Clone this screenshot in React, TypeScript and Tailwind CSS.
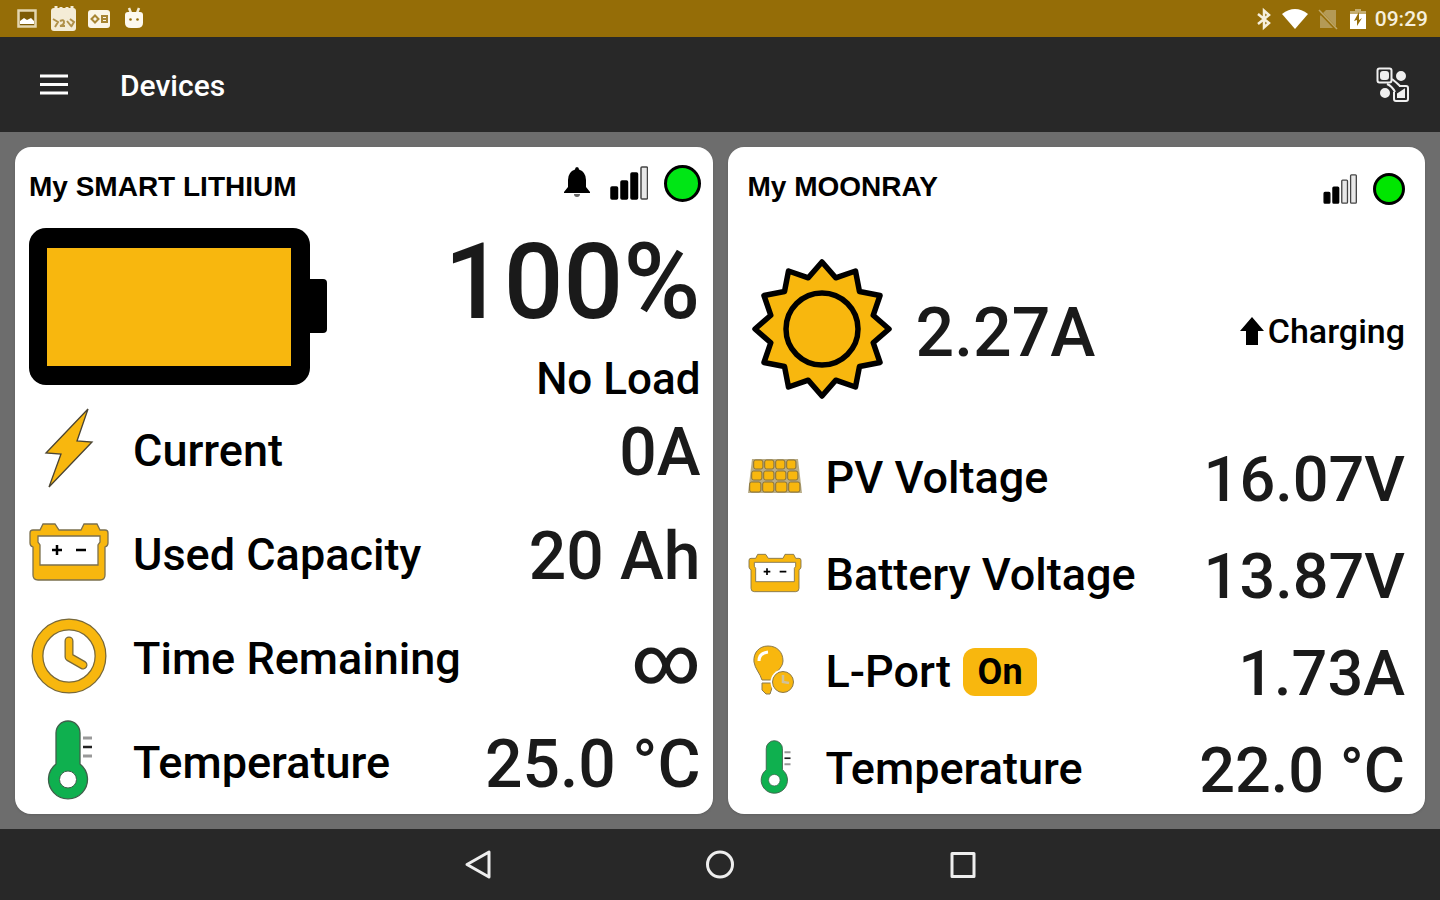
import React, { useState } from 'react';

const AMBER = '#f8b70e';
const GREEN = '#0fb04f';

interface IconProps {
  className?: string;
}

const StatusBar: React.FC = () => (
  <div className="flex h-[37px] items-center justify-between bg-[#956d07] pl-4 pr-3 text-[#f6efdc]">
    <div className="flex items-center gap-[10px]">
      <svg className="h-6 w-6" viewBox="0 0 24 24" fill="none">
        <rect x="2.5" y="3.5" width="17" height="16" fill="#7d5b06" stroke="#e3d6b0" strokeWidth="2.5" />
        <path d="M4 17v-3l4-3 3 2 4-2 3 3v3z" fill="#fff" />
      </svg>
      <svg className="h-7 w-7" viewBox="0 0 28 28">
        <path d="M6 1v4M22 1v4M11 2v3M17 2v3" stroke="#f4ecd6" strokeWidth="3" />
        <rect x="1" y="3" width="25" height="23" rx="3" fill="#f4ecd6" />
        <path d="M3 14l5 3-3 5M10 16q4-2 4 1t-4 4h5M17 16l4 5M20 14l4 3-3 5" stroke="#b0914a" strokeWidth="2" fill="none" />
      </svg>
      <svg className="h-6 w-6" viewBox="0 0 24 24">
        <rect x="0" y="3" width="22" height="18" rx="3" fill="#fbf6e8" />
        <path d="M3.5 12L7 8.500l3.500 3.500L7 15.500z" fill="none" stroke="#a88635" strokeWidth="2" />
        <path d="M14 9h5v6h-5zM14 12h5" fill="none" stroke="#a88635" strokeWidth="2" />
      </svg>
      <svg className="h-6 w-6" viewBox="0 0 24 24" fill="#fdf9ee">
        <path d="M7 1l2 5M17 1l-2 5" stroke="#f4ecd6" strokeWidth="2.500" />
        <path d="M3 8q0-3 3-3h12q3 0 3 3v8q0 5-6 5H9q-6 0-6-5z" />
        <circle cx="8.500" cy="12.500" r="1.300" fill="#956d07" />
        <circle cx="15.500" cy="12.500" r="1.300" fill="#956d07" />
      </svg>
    </div>
    <div className="flex items-center gap-[7px]">
      <div className="flex items-center gap-[10px]">
        <svg className="h-6 w-4" viewBox="0 0 16 24" fill="none" stroke="currentColor" strokeWidth="2.500">
          <path d="M2 7l11 9-5 4.500V3.500L13 8 2 17" />
        </svg>
        <svg className="h-6 w-[26px]" viewBox="0 0 26 24">
          <path d="M13 22L0 7q13-10 26 0z" fill="#fff" />
        </svg>
        <svg className="h-6 w-5" viewBox="0 0 20 24">
          <path d="M8 3h10v18H2V9z" fill="#b49a56" />
          <path d="M0 3l19 20" stroke="#956d07" strokeWidth="3" />
          <path d="M1 3l18 19" stroke="#bfa768" strokeWidth="1.500" />
        </svg>
        <svg className="h-6 w-5" viewBox="0 0 20 24">
          <path d="M7 2h6v2h5v4H2V4h5z" fill="#c4ad70" />
          <path d="M2 7h16v15H2z" fill="#fff" />
          <path d="M11 5v8l3-2-5 8v-6l-3 1z" fill="#956d07" />
        </svg>
      </div>
      <span className="text-[21px] leading-6 font-medium">09:29</span>
    </div>
  </div>
);

const AppBar: React.FC = () => (
  <header className="flex h-[95px] items-center justify-between bg-[#282828] pl-10 pr-[30px] text-white">
    <div className="flex items-center gap-[52px]">
      <button type="button" aria-label="Menu">
        <svg className="h-6 w-7" viewBox="0 0 28 24" stroke="currentColor" strokeWidth="3">
          <path d="M0 3h28M0 11.500h28M0 20h28" />
        </svg>
      </button>
      <h1 className="pt-0.5 text-3xl font-medium">Devices</h1>
    </div>
    <button type="button" aria-label="Device groups">
      <svg className="h-9 w-[34px]" viewBox="0 0 34 36" fill="none" stroke="#f0f0f0" strokeWidth="2">
        <rect x="1.500" y="1.500" width="14" height="14" rx="2" />
        <rect x="5" y="5" width="7" height="7" rx="2" fill="#f0f0f0" />
        <circle cx="25" cy="9" r="4" fill="#f0f0f0" />
        <path d="M16 12q5 4 8 7M11 17q5 2 8 8" />
        <circle cx="9" cy="26" r="4" fill="#f0f0f0" />
        <path d="M23 19h7q2 0 2 2v11q0 2-2 2H20q-2 0-2-2v-7" />
        <path d="M28 23v7h-6v-3z" fill="#f0f0f0" />
      </svg>
    </button>
  </header>
);

const SignalBars: React.FC<IconProps & { level: number }> = ({ className, level }) => {
  const heights = [12, 18, 26, 32];
  return (
    <svg className={className} viewBox="0 0 38 34" role="img" aria-label="Signal strength">
      {heights.map((h, i) => (
        <rect
          key={h}
          x={1 + i * 10}
          y={33 - h}
          width="6.500"
          height={h}
          rx="1"
          fill={i < level ? '#000' : '#e8e8e8'}
          stroke={i < level ? '#000' : '#444'}
          strokeWidth="1.500"
        />
      ))}
    </svg>
  );
};

const BellIcon: React.FC<IconProps> = ({ className }) => (
  <svg className={className} viewBox="0 0 26 32">
    <path d="M13 0q2 0 2 2.500Q22 5 22 13v7l4 5v1H0v-1l4-5v-7Q4 5 11 2.500 11 0 13 0z" />
    <path d="M10 27h6q0 3-3 3t-3-3z" fill="#666" />
  </svg>
);

const BatteryLevel: React.FC<IconProps> = ({ className }) => (
  <svg className={className} viewBox="0 0 300 157" role="img" aria-label="Battery full">
    <rect width="281" height="157" rx="17" />
    <rect x="270" y="51" width="28" height="54" rx="4" />
    <rect x="18" y="20" width="244" height="118" fill={AMBER} />
  </svg>
);

const BoltIcon: React.FC<IconProps> = ({ className }) => (
  <svg className={className} viewBox="0 0 80 80">
    <path d="M59 1L17 45l15 1-12 33 43-45-15-1z" fill={AMBER} stroke="#4a4433" strokeWidth="1.300" />
  </svg>
);

const CarBatteryIcon: React.FC<IconProps> = ({ className }) => (
  <svg className={className} viewBox="0 0 80 60">
    <path
      d="M14 2h12l4 6h22l3-6h13l3 6h5q3 0 3 3v10q0 3-3 4v28q0 5-5 5H9q-5 0-5-5V25q-3-1-3-4V11q0-3 3-3h7z"
      fill={AMBER}
      stroke="#7b704e"
      strokeWidth="1.300"
    />
    <path d="M9 14h62v6l-2 3v20H11V23l-2-3z" fill="#fff" stroke="#7b704e" strokeWidth="1.300" />
    <path d="M23 28h10M28 23v10M47 28h10" stroke="#000" strokeWidth="2.500" />
  </svg>
);

const ClockIcon: React.FC<IconProps> = ({ className }) => (
  <svg className={className} viewBox="0 0 80 80" fill="none">
    <circle cx="40" cy="40" r="31.500" stroke="#77683a" strokeWidth="12" />
    <circle cx="40" cy="40" r="31.500" stroke={AMBER} strokeWidth="9.500" />
    <path d="M40 25v16l14 8" stroke="#77683a" strokeWidth="9" strokeLinecap="round" strokeLinejoin="round" />
    <path d="M40 25v16l14 8" stroke={AMBER} strokeWidth="6.500" strokeLinecap="round" strokeLinejoin="round" />
  </svg>
);

const ThermometerIcon: React.FC<IconProps> = ({ className }) => (
  <svg className={className} viewBox="0 0 80 80">
    <path
      d="M27 44V13a12 12 0 0 1 24 0v31a19.500 19.500 0 1 1-24 0z"
      fill={GREEN}
      stroke="#3f5f4a"
      strokeWidth="1.300"
    />
    <circle cx="39" cy="59.500" r="8.500" fill="#fff" stroke="#3f5f4a" />
    <path d="M54 18h9M54 36h9" stroke="#999" strokeWidth="3" />
    <path d="M54 27h9" stroke="#222" strokeWidth="2.500" />
  </svg>
);

const SunIcon: React.FC<IconProps> = ({ className }) => {
  const points = Array.from({ length: 24 }, (_, i) => {
    const r = i % 2 === 0 ? 67 : 53;
    const a = (i * Math.PI) / 12;
    return `${70 + r * Math.sin(a)},${70 - r * Math.cos(a)}`;
  }).join(' ');
  return (
    <svg className={className} viewBox="0 0 140 140" stroke="#000" strokeLinejoin="round">
      <polygon points={points} fill={AMBER} strokeWidth="5.500" />
      <circle cx="70" cy="70" r="36" fill={AMBER} strokeWidth="5.500" />
    </svg>
  );
};

const SolarPanelIcon: React.FC<IconProps> = ({ className }) => {
  const rows = [
    { y: 2, h: 9, left: 5, width: 44 },
    { y: 13, h: 9, left: 3, width: 48 },
    { y: 24, h: 10, left: 1, width: 52 },
  ];
  return (
    <svg className={className} viewBox="0 0 54 36">
      <path d="M4 1h46l4 34H0z" fill="#b9ad88" />
      {rows.map((row) =>
        [0, 1, 2, 3].map((i) => (
          <rect
            key={`${row.y}-${i}`}
            x={row.left + (i * row.width) / 4 + 0.7}
            y={row.y}
            width={row.width / 4 - 1.8}
            height={row.h}
            rx="2"
            fill={AMBER}
            stroke="#86713a"
            strokeWidth="1"
          />
        ))
      )}
    </svg>
  );
};

const BulbTimerIcon: React.FC<IconProps> = ({ className }) => (
  <svg className={className} viewBox="0 0 54 50" stroke="#8c7a4a" strokeWidth="1">
    <path d="M20 1C11 1 5 8 6 17c1 7 6 11 8 18h10c0-6 11-11 11-19C35 7 29 1 20 1z" fill={AMBER} />
    <path d="M14 38h10v5l-2 6h-4l-4-4z" fill={AMBER} />
    <path d="M11 16q0-8 9-9" fill="none" stroke="#fff" strokeWidth="3" />
    <circle cx="35" cy="37" r="12.500" fill="#fff" stroke="none" />
    <circle cx="35" cy="37" r="10.500" fill={AMBER} />
    <path d="M35 30v7l6 1" fill="none" stroke="#cfc19a" strokeWidth="2.500" />
  </svg>
);

const ArrowUpIcon: React.FC<IconProps> = ({ className }) => (
  <svg className={className} viewBox="0 0 24 28">
    <path d="M12 0l12 14h-6v14H6V14H0z" />
  </svg>
);

interface ReadingProps {
  icon: React.ReactNode;
  label: string;
  value: string;
  children?: React.ReactNode;
}

const LargeReading: React.FC<ReadingProps> = ({ icon, label, value }) => (
  <div className="flex min-h-[104px] items-center">
    <span className="flex w-20 flex-none justify-center pb-1">{icon}</span>
    <dt className="ml-6 flex-1 pt-0.5 text-[45px] leading-[52px]">{label}</dt>
    <dd className="pt-1.5 text-[66px] leading-[72px] text-[#1a1a1a]">{value}</dd>
  </div>
);

const SmallReading: React.FC<ReadingProps> = ({ icon, label, value, children }) => (
  <div className="flex min-h-[88px] items-center">
    <span className="flex w-[54px] flex-none justify-center pb-0.5">{icon}</span>
    <dt className="ml-6 flex flex-1 items-center gap-3 pt-0.5 text-[45px] leading-[52px]">
      {label}
      {children}
    </dt>
    <dd className="pt-1.5 text-[63px] leading-[72px] text-[#1a1a1a]">{value}</dd>
  </div>
);

const LithiumCard: React.FC = () => (
  <section className="flex flex-col rounded-2xl bg-white pl-[14px] pr-3 shadow">
    <div className="flex h-[78px] items-center justify-between">
      <h2 className="pt-0.5 font-['Liberation_Sans',Arial,sans-serif] text-[28px] leading-8 font-bold">My SMART LITHIUM</h2>
      <div className="flex items-center gap-4 pb-1.5">
        <BellIcon className="mr-1 h-8 w-[26px]" />
        <SignalBars className="h-[34px] w-[38px]" level={3} />
        <span className="h-[37px] w-[37px] rounded-full border-[3px] border-black bg-[#00e615]" />
      </div>
    </div>
    <div className="flex h-[173px] items-start justify-between">
      <BatteryLevel className="mt-[3px] h-[157px] w-[300px]" />
      <div className="pt-1 text-right">
        <p className="text-[105px] leading-[108px] text-[#1a1a1a]">100%</p>
        <p className="mt-4 text-[44px] leading-[52px]">No Load</p>
      </div>
    </div>
    <dl>
      <LargeReading icon={<BoltIcon className="h-20 w-20" />} label="Current" value="0A" />
      <LargeReading icon={<CarBatteryIcon className="h-[60px] w-20" />} label="Used Capacity" value="20 Ah" />
      <LargeReading icon={<ClockIcon className="h-20 w-20" />} label="Time Remaining" value="∞" />
      <LargeReading icon={<ThermometerIcon className="h-20 w-20" />} label="Temperature" value="25.0 °C" />
    </dl>
  </section>
);

const MoonrayCard: React.FC = () => {
  const [portOn, setPortOn] = useState(true);

  return (
    <section className="flex flex-col rounded-2xl bg-white px-5 shadow">
      <div className="flex h-[78px] items-center justify-between">
        <h2 className="pt-0.5 font-['Liberation_Sans',Arial,sans-serif] text-[28px] leading-8 font-bold">My MOONRAY</h2>
        <div className="flex items-center gap-4 pt-1.5">
          <SignalBars className="h-[30px] w-[34px]" level={2} />
          <span className="h-8 w-8 rounded-full border-[3px] border-black bg-[#00e600]" />
        </div>
      </div>
      <div className="flex h-[208px] items-center">
        <SunIcon className="ml-1 h-[140px] w-[140px]" />
        <p className="ml-6 flex-1 pt-2 text-[68px] leading-[72px] text-[#1a1a1a]">2.27A</p>
        <p className="flex items-center gap-1 pt-1 text-[34px] leading-10">
          <ArrowUpIcon className="h-7 w-6" />
          Charging
        </p>
      </div>
      <dl className="flex flex-col gap-[9px]">
        <SmallReading icon={<SolarPanelIcon className="h-9 w-[54px]" />} label="PV Voltage" value="16.07V" />
        <SmallReading icon={<CarBatteryIcon className="h-10 w-[54px]" />} label="Battery Voltage" value="13.87V" />
        <SmallReading icon={<BulbTimerIcon className="h-[50px] w-[54px]" />} label="L-Port" value="1.73A">
          <button
            type="button"
            onClick={() => setPortOn(!portOn)}
            className="h-12 w-[74px] rounded-xl bg-[#f8b70e] text-4xl font-bold"
          >
            {portOn ? 'On' : 'Off'}
          </button>
        </SmallReading>
        <SmallReading
          icon={<ThermometerIcon className="h-[54px] w-[54px]" />}
          label="Temperature"
          value="22.0 °C"
        />
      </dl>
    </section>
  );
};

const NavBar: React.FC = () => (
  <nav className="flex h-[72px] items-center justify-center bg-[#282828]">
    <button type="button" aria-label="Back" className="flex w-[242px] justify-center">
      <svg className="h-8 w-8" viewBox="0 0 32 32" fill="none" stroke="#eee" strokeWidth="3" strokeLinejoin="round">
        <path d="M27 3v25L5 15.500z" />
      </svg>
    </button>
    <button type="button" aria-label="Home" className="flex w-[242px] justify-center">
      <svg className="h-8 w-8" viewBox="0 0 32 32" fill="none" stroke="#eee" strokeWidth="3">
        <circle cx="16" cy="15.500" r="12.500" />
      </svg>
    </button>
    <button type="button" aria-label="Recent apps" className="flex w-[242px] justify-center">
      <svg className="h-8 w-8" viewBox="0 0 32 32" fill="none" stroke="#eee" strokeWidth="3" strokeLinejoin="round">
        <rect x="6" y="4.500" width="22" height="23" />
      </svg>
    </button>
  </nav>
);

const App: React.FC = () => (
  <div className="flex min-h-screen flex-col bg-[#6d6d6d] font-[Roboto,sans-serif] font-medium text-black">
    <StatusBar />
    <AppBar />
    <main className="grid flex-1 grid-cols-2 gap-[15px] p-[15px]">
      <LithiumCard />
      <MoonrayCard />
    </main>
    <NavBar />
  </div>
);

export default App;
